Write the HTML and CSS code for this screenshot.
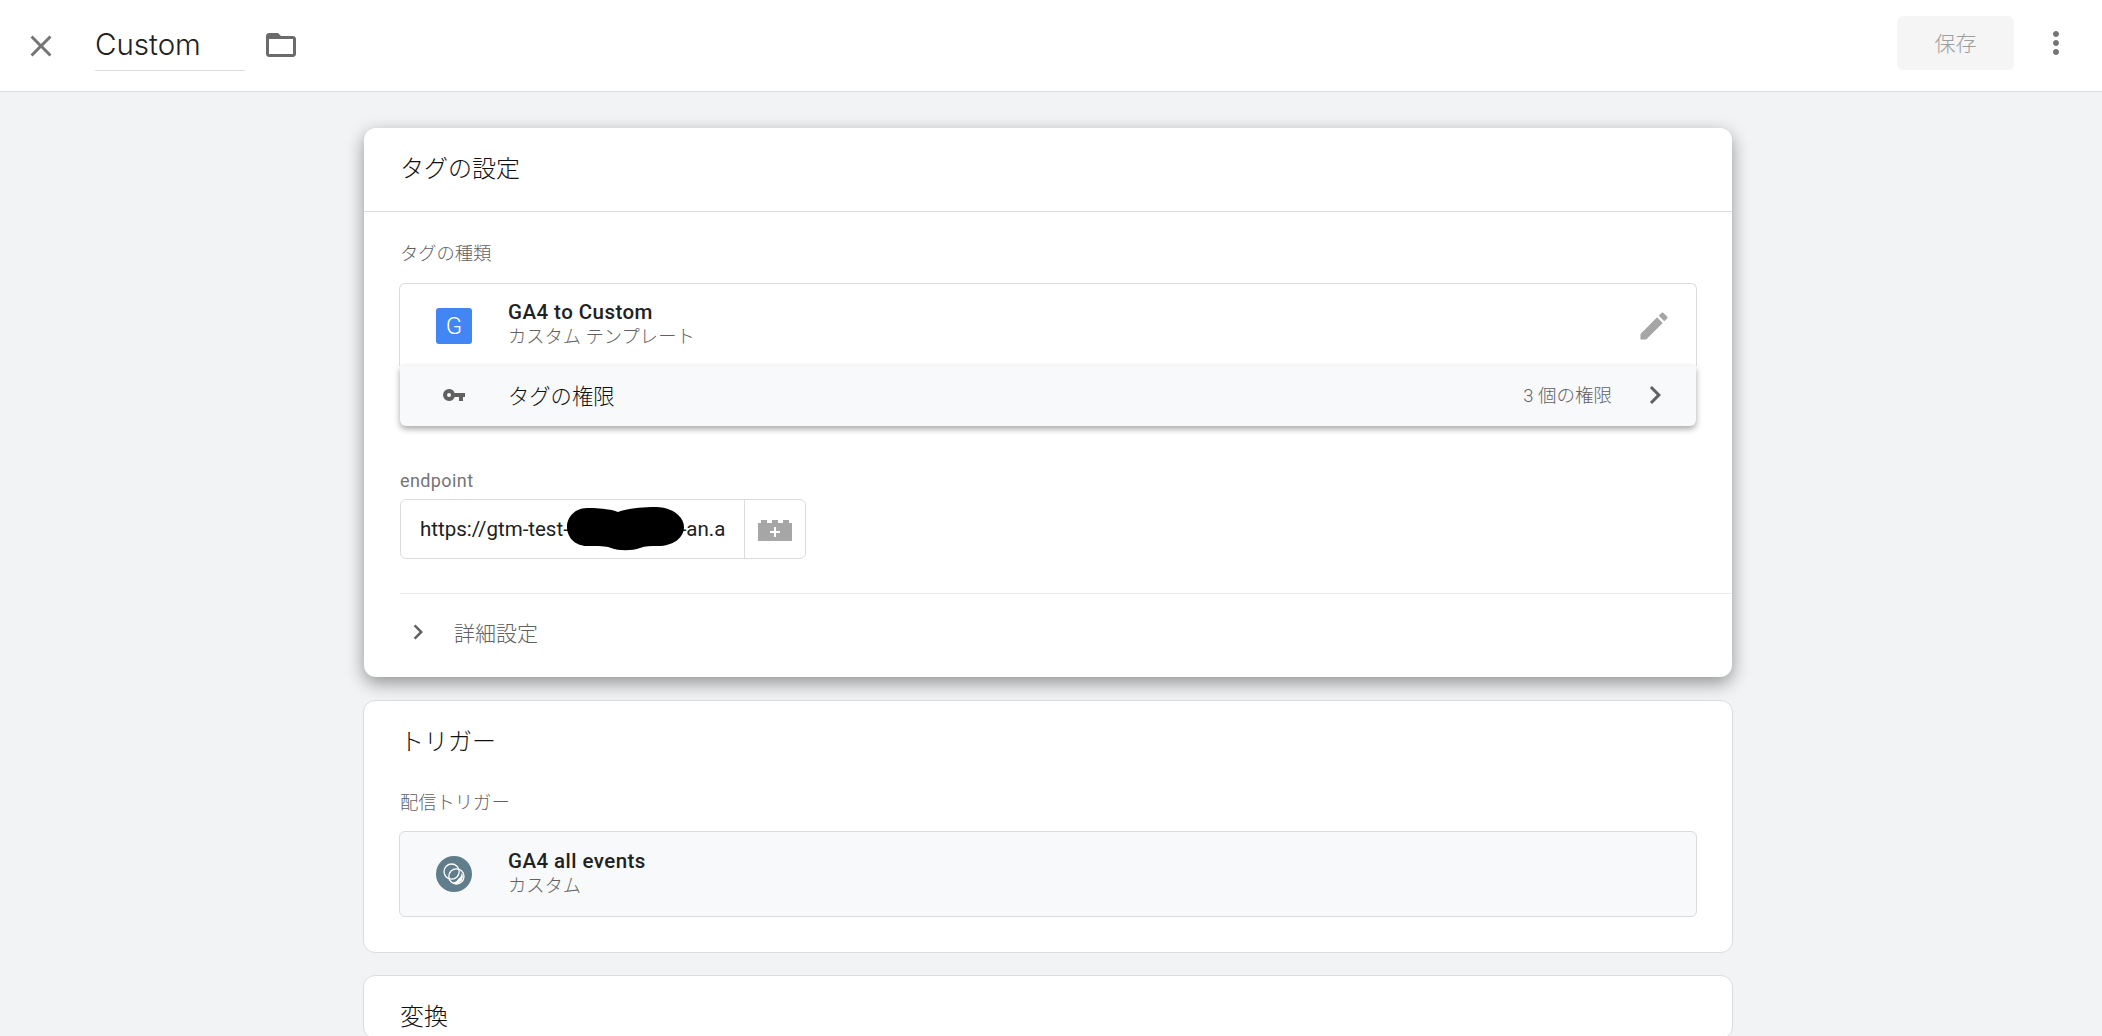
FILE: index.html
```html
<!DOCTYPE html>
<html lang="ja">
<head>
  <meta charset="UTF-8" />
  <title>Custom</title>
  <link rel="stylesheet" href="styles.css">
</head>
<body>
  <header class="topbar">
    <button class="icon-btn close-btn">
      <svg width="36" height="36" viewBox="0 0 24 24"><path fill="#757575" d="M19 6.41 17.59 5 12 10.59 6.41 5 5 6.41 10.59 12 5 17.59 6.41 19 12 13.41 17.59 19 19 17.59 13.41 12z"/></svg>
    </button>
    <div class="name-field">Custom</div>
    <button class="icon-btn folder-btn">
      <svg width="36" height="36" viewBox="0 0 24 24"><path fill="#6b6b6b" d="M20 6h-8l-2-2H4c-1.1 0-2 .9-2 2v12c0 1.1.9 2 2 2h16c1.1 0 2-.9 2-2V8c0-1.1-.9-2-2-2zm0 12H4V8h16v10z"/></svg>
    </button>
    <div class="topbar-right">
      <button class="save-btn">保存</button>
      <button class="icon-btn more-btn">
        <svg width="36" height="36" viewBox="0 0 24 24"><path fill="#757575" d="M12 8c1.1 0 2-.9 2-2s-.9-2-2-2-2 .9-2 2 .9 2 2 2zm0 2c-1.1 0-2 .9-2 2s.9 2 2 2 2-.9 2-2-.9-2-2-2zm0 6c-1.1 0-2 .9-2 2s.9 2 2 2 2-.9 2-2-.9-2-2-2z"/></svg>
      </button>
    </div>
  </header>

  <main class="content">
    <section class="card card-active">
      <h2 class="card-title title-ruled">タグの設定</h2>
      <div class="card-body">
        <div class="field-label">タグの種類</div>
        <div class="type-box">
          <div class="row-icon">
            <div class="g-badge">G</div>
          </div>
          <div class="row-text">
            <div class="row-name">GA4 to Custom</div>
            <div class="row-sub">カスタム テンプレート</div>
          </div>
          <svg class="edit-icon" width="36" height="36" viewBox="0 0 24 24"><path fill="#a6a6a6" d="M3 17.25V21h3.75L17.81 9.94l-3.75-3.75L3 17.25zM20.71 7.04a1 1 0 0 0 0-1.41l-2.34-2.34a1 1 0 0 0-1.41 0l-1.83 1.83 3.75 3.75 1.83-1.83z"/></svg>
        </div>
        <div class="perm-row">
          <div class="row-icon">
            <svg width="24" height="24" viewBox="0 0 24 24"><path fill="#616161" d="M12.65 10A6 6 0 0 0 7 6a6 6 0 0 0 0 12 6 6 0 0 0 5.65-4H17v4h4v-4h2v-4H12.65zM7 14a2 2 0 1 1 0-4 2 2 0 0 1 0 4z"/></svg>
          </div>
          <div class="perm-name">タグの権限</div>
          <div class="perm-count">3 個の権限</div>
          <svg class="perm-arrow" width="36" height="36" viewBox="0 0 24 24"><path fill="#616161" d="M10 6 8.59 7.41 13.17 12l-4.58 4.59L10 18l6-6z"/></svg>
        </div>

        <div class="field-label endpoint-label">endpoint</div>
        <div class="input-group">
          <div class="input-value">https://gtm-test-xxxxxxxxxxx-an.a</div>
          <div class="input-addon">
            <svg width="36" height="24" viewBox="0 0 36 24"><path fill="#a6a6a6" d="M1 6h3V3h6v3h5V3h6v3h5V3h6v3h3v18H1z"/><path fill="#fff" d="M17 10h2v4h4v2h-4v4h-2v-4h-4v-2h4z"/></svg>
          </div>
          <svg class="blot" width="118" height="44" viewBox="0 0 118 44"><path fill="#000" d="M20 1c11 0 24 1 31 4 7-3 22-5 38-5 15 0 28 9 28 20 0 11-11 19-26 19-7 0-13 0-18 2-8 3-21 3-29 0-5-2-12-2-24-2C8 39 0 30 0 20 0 9 9 1 20 1z"/></svg>
        </div>
      </div>
      <div class="details-row">
        <svg width="30" height="30" viewBox="0 0 24 24"><path fill="#616161" d="M10 6 8.59 7.41 13.17 12l-4.58 4.59L10 18l6-6z"/></svg>
        <span>詳細設定</span>
      </div>
    </section>

    <section class="card">
      <h2 class="card-title">トリガー</h2>
      <div class="card-body">
        <div class="field-label">配信トリガー</div>
        <div class="trigger-box">
          <div class="row-icon">
            <svg width="36" height="36" viewBox="0 0 36 36">
              <circle cx="18" cy="18" r="18" fill="#607d8b"/>
              <path fill="#fff" d="M22.6 22.6a7.4 7.4 0 0 0 3-6.2 7.4 7.4 0 0 1-10.2 10.2 7.4 7.4 0 0 0 7.2-4z"/>
              <circle cx="15.6" cy="15.6" r="7.6" fill="none" stroke="#fff" stroke-width="1.3"/>
              <circle cx="20.4" cy="20.4" r="7.6" fill="none" stroke="#fff" stroke-width="1.3"/>
            </svg>
          </div>
          <div class="row-text">
            <div class="row-name">GA4 all events</div>
            <div class="row-sub">カスタム</div>
          </div>
        </div>
      </div>
    </section>

    <section class="card">
      <h2 class="card-title">変換</h2>
    </section>
  </main>
</body>
</html>
```

FILE: styles.css
```css
* {
  box-sizing: border-box;
}

html, body {
  height: 100%;
}

body {
  margin: 0;
  background: #f1f3f4;
  color: #212121;
  font-family: Roboto, "Noto Sans CJK JP", sans-serif;
  overflow: hidden;
}

button {
  font-family: inherit;
  border: none;
  background: none;
  padding: 0;
}

.icon-btn {
  display: flex;
  width: 36px;
  height: 36px;
}

.topbar {
  height: 92px;
  background: #fff;
  border-bottom: 1px solid #dadce0;
  display: flex;
  align-items: center;
  padding-left: 23px;
}

.name-field {
  width: 150px;
  height: 54px;
  margin-left: 36px;
  margin-top: -4px;
  font-family: Inter, sans-serif;
  font-size: 29.5px;
  font-weight: 300;
  line-height: 54px;
  color: #212121;
  border-bottom: 1px solid #dadce0;
}

.folder-btn {
  margin-left: 18px;
  margin-top: -1px;
}

.topbar-right {
  margin-left: auto;
  display: flex;
  align-items: center;
  padding-right: 28px;
}

.save-btn {
  width: 117px;
  height: 54px;
  padding-bottom: 3px;
  background: #f5f5f5;
  border-radius: 6px;
  color: #9e9e9e;
  font-size: 21px;
  font-weight: 300;
  margin-top: -5px;
}

.more-btn {
  margin-left: 24px;
  margin-top: -5px;
}

.content {
  width: 1370px;
  margin: 0 0 0 363px;
  padding-top: 36px;
}

.card {
  background: #fff;
  border: 1px solid #dadce0;
  border-radius: 12px;
  margin-bottom: 22px;
}

.card-active {
  width: 1368px;
  margin-left: 1px;
  border: none;
  height: 549px;
  box-shadow: 0 6px 18px rgba(0, 0, 0, 0.4);
  margin-bottom: 23px;
}

.card-title {
  margin: 0;
  padding: 21px 36px 0;
  font-size: 24px;
  font-weight: 300;
  line-height: 40px;
  height: 62px;
  color: #111;
}

.title-ruled {
  height: 84px;
  border-bottom: 1px solid #dadce0;
}

.card-body {
  padding: 0 35px;
}

.field-label {
  font-size: 18.3px;
  font-weight: 300;
  line-height: 26px;
  color: #616161;
  padding-top: 27px;
  height: 67px;
  margin-left: 1px;
}

.card-active .field-label {
  padding-top: 29px;
  height: 71px;
}

.type-box {
  height: 83px;
  border: 1px solid #dadce0;
  border-bottom: none;
  border-radius: 6px 6px 0 0;
  display: flex;
  align-items: center;
}

.trigger-box {
  height: 86px;
  margin-top: 1px;
  background: #f8f9fa;
  border: 1px solid #dadce0;
  border-radius: 6px;
  display: flex;
  align-items: center;
  margin-bottom: 35px;
}

.row-icon {
  width: 108px;
  padding-left: 36px;
  flex: none;
  display: flex;
}

.type-box .row-icon {
  padding-top: 2px;
}

.g-badge {
  width: 36px;
  height: 36px;
  border-radius: 3px;
  background: #4285f4;
  color: #fff;
  font-size: 24px;
  font-weight: 300;
  line-height: 36px;
  text-align: center;
}

.row-text {
  flex: 1;
  padding-bottom: 2px;
}

.row-name {
  font-size: 20.5px;
  line-height: 25px;
  font-weight: 500;
  letter-spacing: 0.45px;
}

.row-sub {
  font-size: 18.3px;
  font-weight: 300;
  line-height: 24px;
  color: #616161;
}

.edit-icon {
  margin-right: 24px;
  margin-top: 2px;
}

.perm-row {
  height: 60px;
  margin: 0 1px;
  padding-bottom: 3px;
  background: #f8f9fa;
  border-radius: 0 0 6px 6px;
  box-shadow: 0 3px 6px rgba(0, 0, 0, 0.35);
  display: flex;
  align-items: center;
  position: relative;
}

.perm-row .row-icon {
  padding-left: 42px;
  width: 108px;
}

.perm-name {
  font-size: 21.3px;
  font-weight: 300;
  color: #111;
  flex: 1;
  padding-bottom: 1px;
}

.perm-count {
  font-size: 18.5px;
  font-weight: 300;
  color: #616161;
  margin-right: 25px;
  padding-bottom: 1px;
}

.perm-arrow {
  margin-right: 23px;
}

.card-active .endpoint-label {
  height: 73px;
  padding-top: 42px;
  letter-spacing: 0.4px;
  font-weight: 400;
  color: #757575;
  font-size: 18px;
}

.input-group {
  width: 406px;
  height: 60px;
  margin-left: 1px;
  border: 1px solid #dadce0;
  border-radius: 6px;
  display: flex;
  position: relative;
}

.input-value {
  width: 344px;
  padding-left: 19px;
  font-size: 20.5px;
  line-height: 58px;
  white-space: nowrap;
  overflow: hidden;
  color: #212121;
  border-right: 1px solid #dadce0;
}

.input-addon {
  flex: 1;
  display: flex;
  align-items: center;
  justify-content: center;
}

.blot {
  position: absolute;
  left: 166px;
  top: 7px;
}

.details-row {
  margin: 34px 0 0 36px;
  border-top: 1px solid #e8eaed;
  height: 83px;
  display: flex;
  align-items: center;
  color: #616161;
  font-size: 21px;
  font-weight: 300;
  padding-bottom: 6px;
}

.details-row svg {
  margin-left: 3px;
  margin-right: 21px;
}
```
